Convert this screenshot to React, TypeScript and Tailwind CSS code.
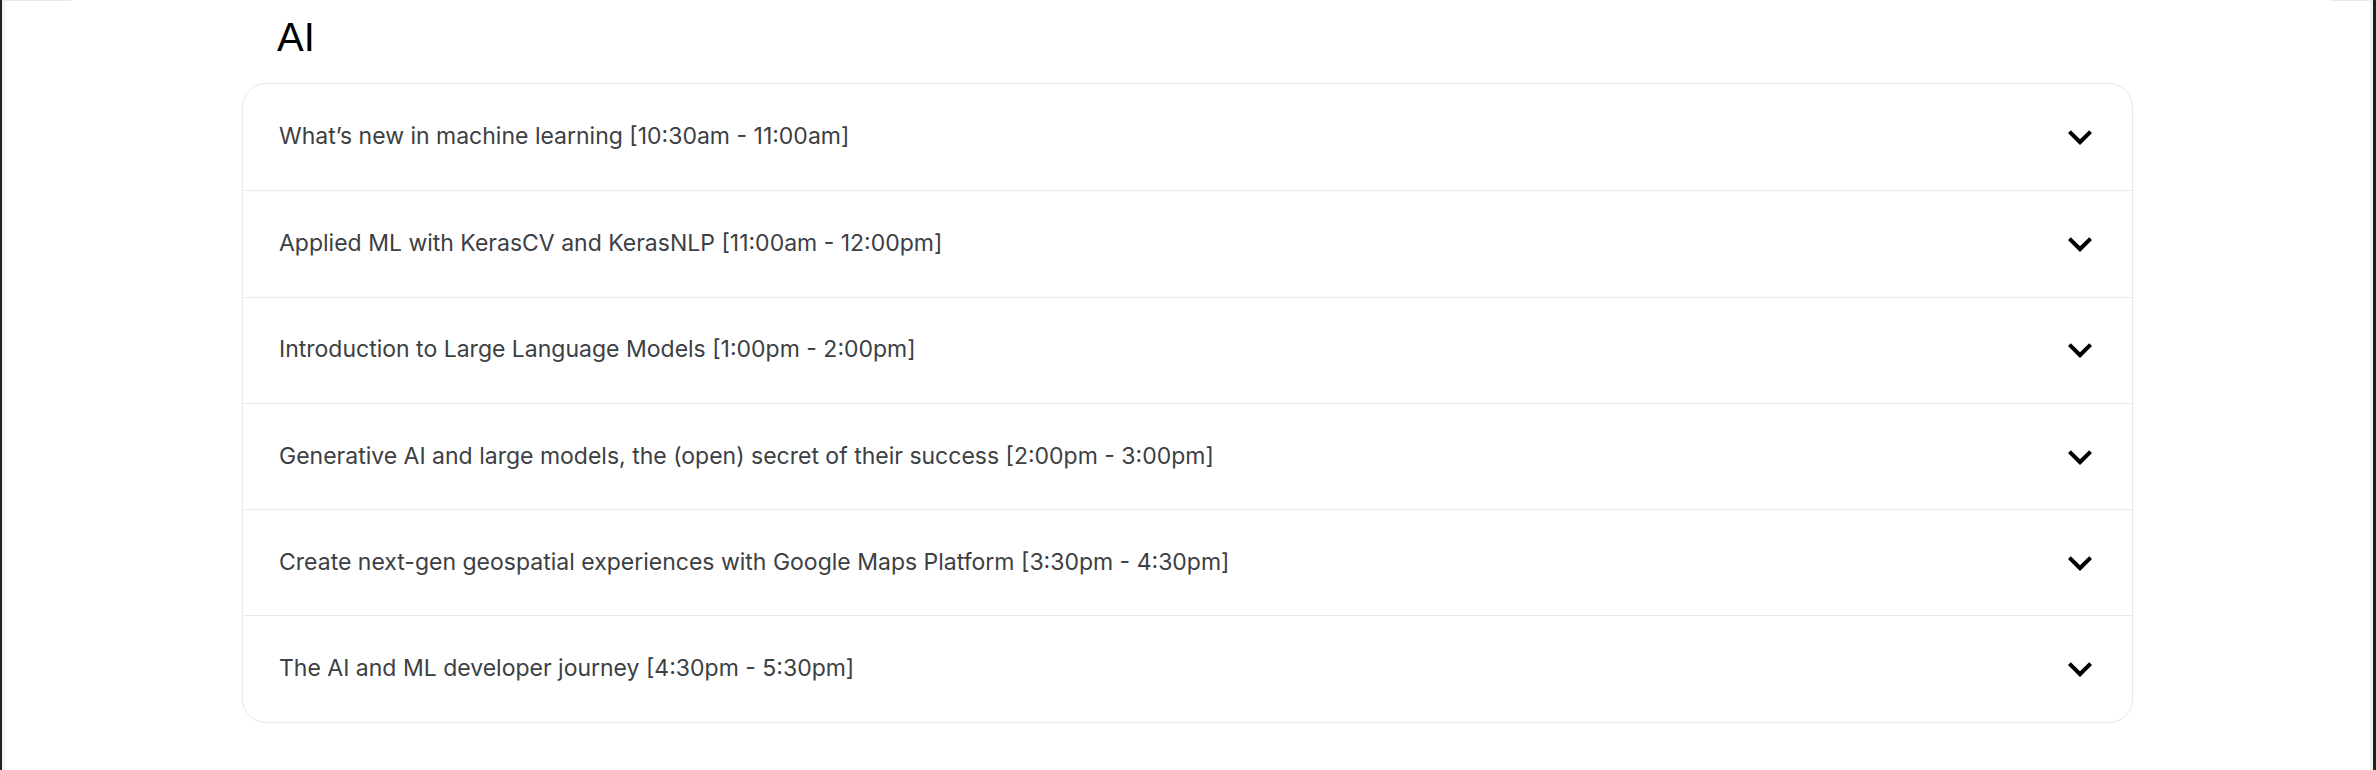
import React from "react";

const sessions = [
  "What’s new in machine learning [10:30am - 11:00am]",
  "Applied ML with KerasCV and KerasNLP [11:00am - 12:00pm]",
  "Introduction to Large Language Models [1:00pm - 2:00pm]",
  "Generative AI and large models, the (open) secret of their success [2:00pm - 3:00pm]",
  "Create next-gen geospatial experiences with Google Maps Platform [3:30pm - 4:30pm]",
  "The AI and ML developer journey [4:30pm - 5:30pm]",
];

function Chevron() {
  return (
    <svg width="48" height="48" viewBox="0 0 24 24" className="shrink-0" aria-hidden="true">
      <path d="M16.59 8.59L12 13.17 7.41 8.59 6 10l6 6 6-6z" fill="#000" />
    </svg>
  );
}

export default function App() {
  return (
    <div className="min-h-[770px] bg-white border-l-[2px] border-r-[3px] border-[#202124]">
      <div className="min-h-[770px] border-l-[3px] border-r-[3px] border-[#f1f3f4]">
        <div className="flex h-px">
          <div className="w-[66px] bg-[#e8eaed]" />
          <div className="flex-1" />
          <div className="w-[40px] bg-[#e8eaed]" />
        </div>
        <div className="mx-auto w-[1891px]">
          <h2
            className="pl-[35px] pt-[16px] mb-[26px] text-[40px] leading-[40px] text-black font-normal"
            style={{ fontFamily: '"Liberation Sans", Arial, sans-serif' }}
          >
            AI
          </h2>
          <div className="rounded-[24px] border border-[#e8eaed] overflow-hidden">
            {sessions.map((s, i) => (
              <div
                key={i}
                className={`flex h-[106.3px] items-center justify-between pl-[36px] pr-[28px] ${
                  i > 0 ? "border-t border-[#e8eaed]" : ""
                }`}
              >
                <span
                  className="pb-[1px] text-[23px] text-[#3c4043]"
                  style={{ fontFamily: 'Inter, "Noto Sans", sans-serif' }}
                >
                  {s}
                </span>
                <Chevron />
              </div>
            ))}
          </div>
        </div>
      </div>
    </div>
  );
}
